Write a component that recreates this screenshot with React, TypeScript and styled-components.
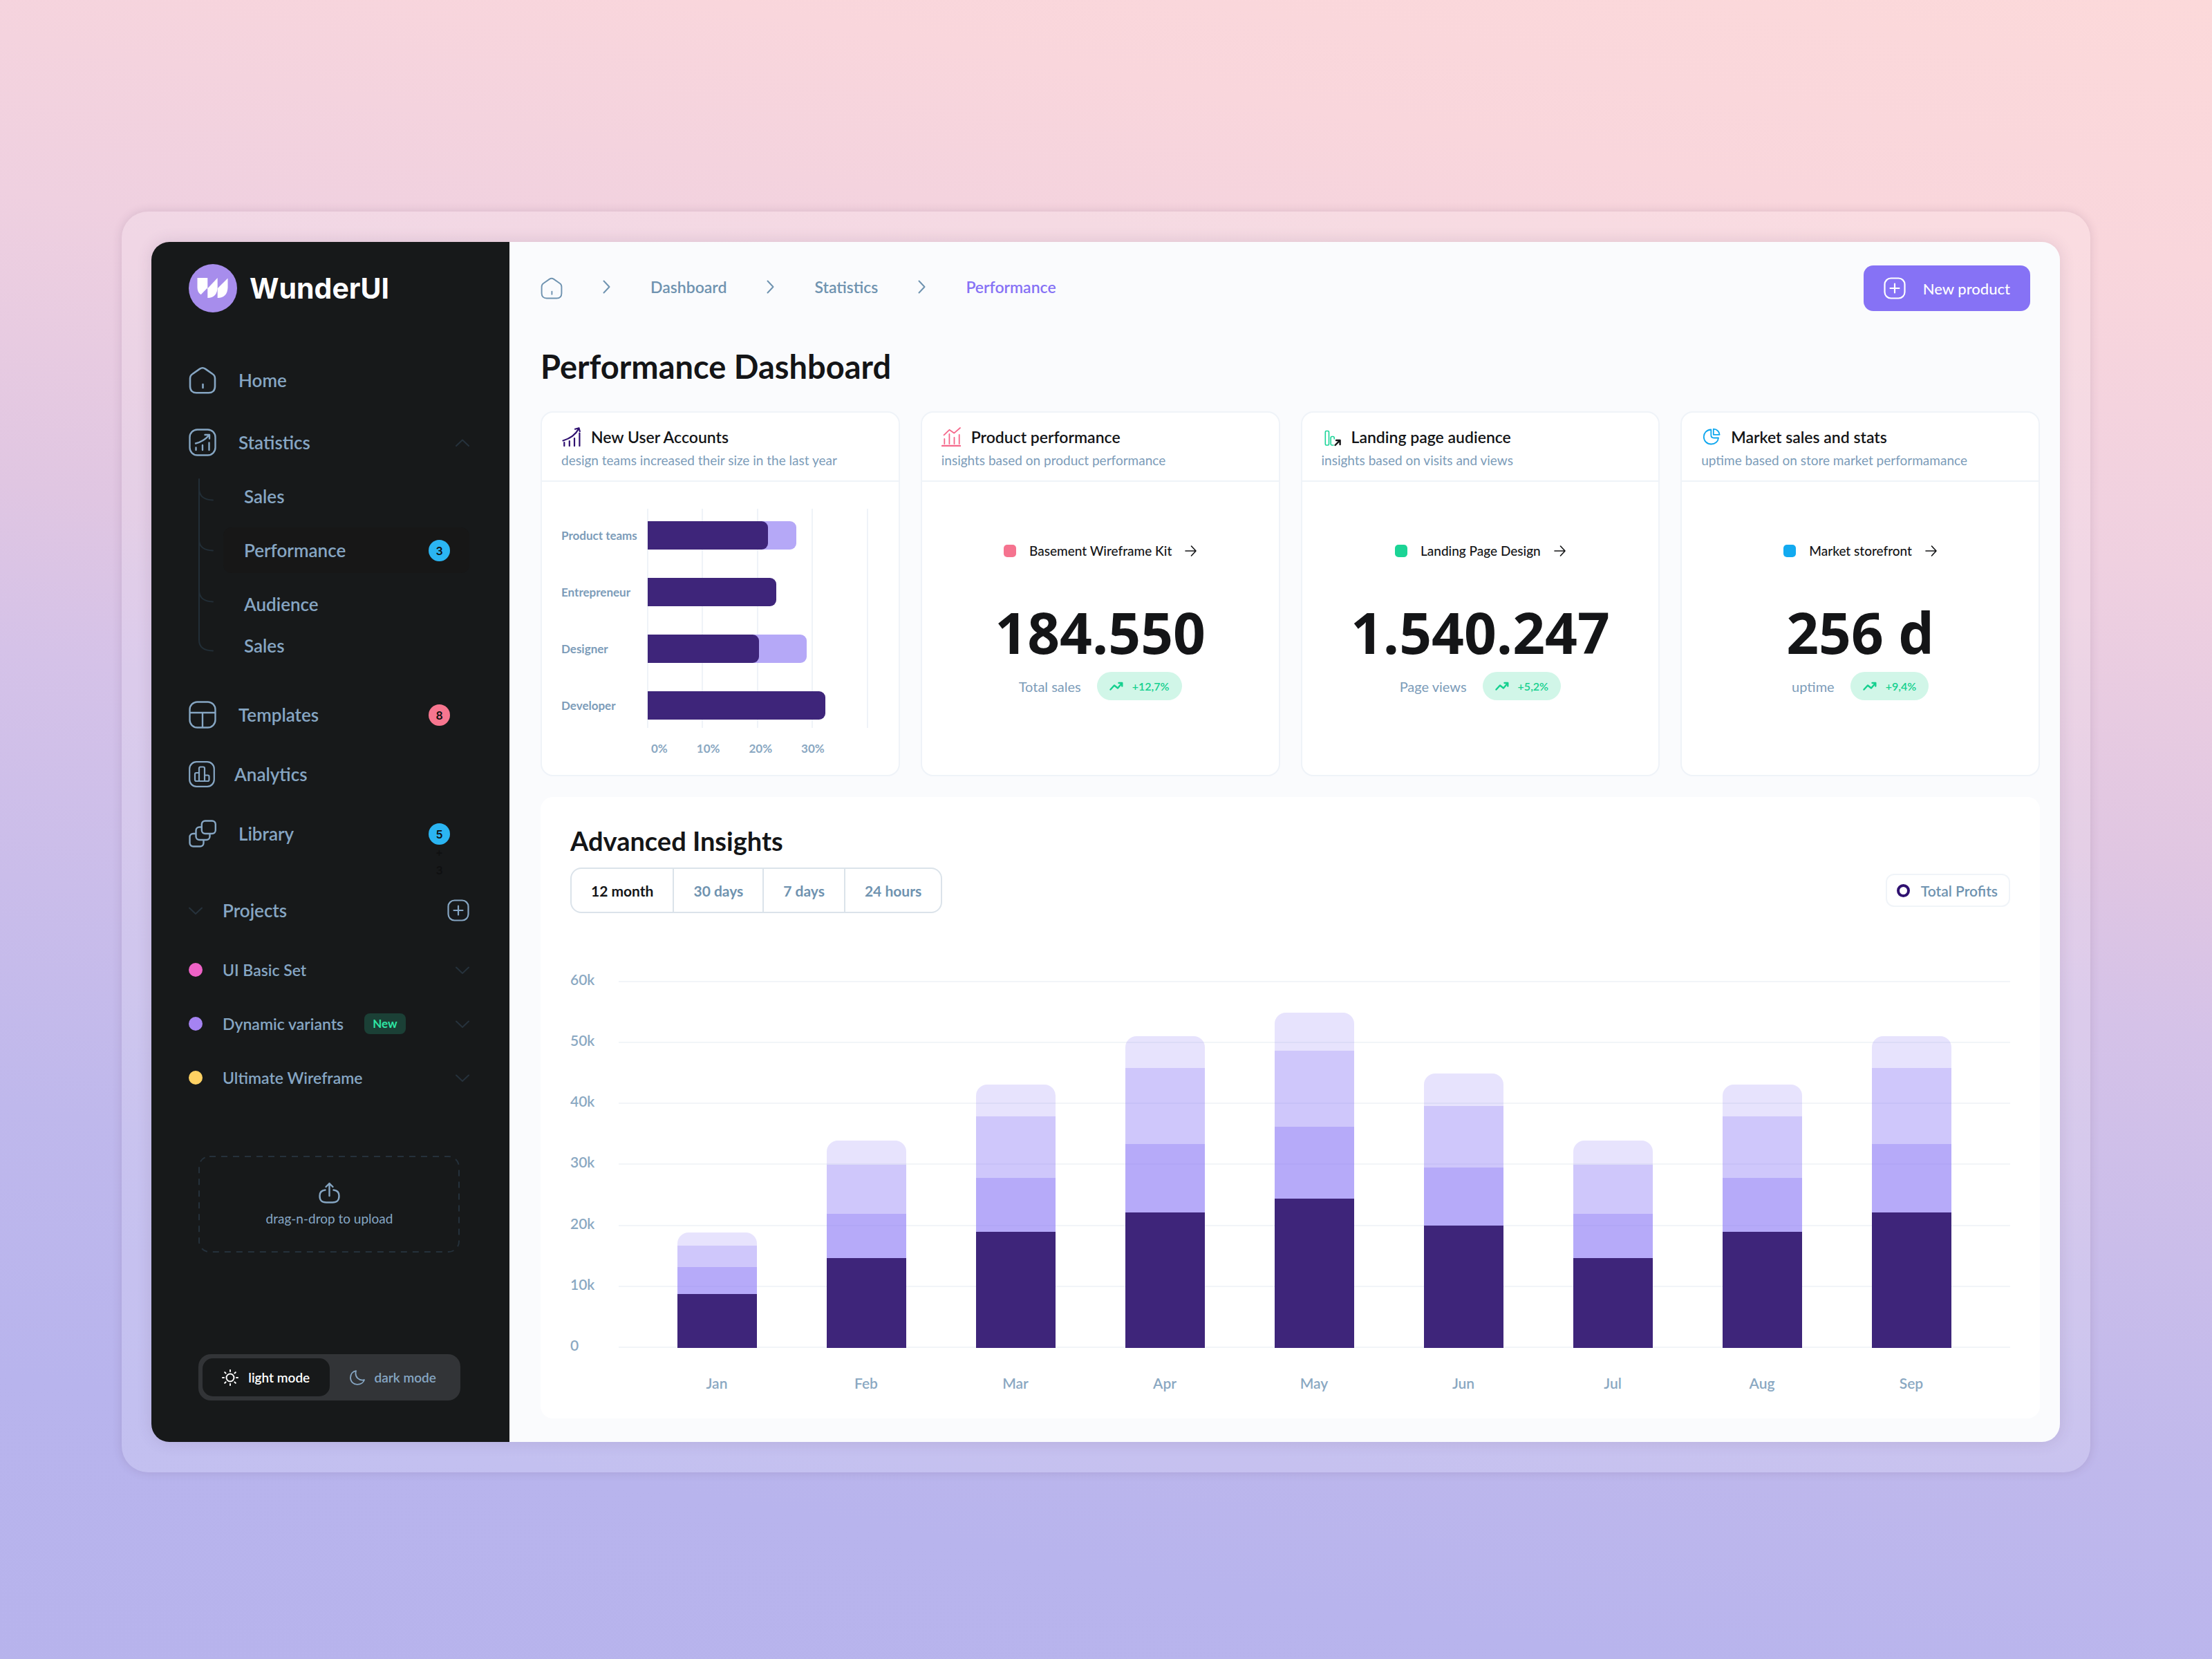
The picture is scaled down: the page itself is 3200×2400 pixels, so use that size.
import React, { useState } from "react";
import styled, { createGlobalStyle } from "styled-components";

const ink = "#141517";
const muted = "#7c9cb9";
const night = "#17191a";
const sky = "#86a6c3";
const violet = "#8672f5";
const grape = "#3e257a";
const hairline = "#eff3f8";

const GlobalStyle = createGlobalStyle`
  *, *::before, *::after { box-sizing: border-box; }
  body { margin: 0; font-family: Lato, "Liberation Sans", sans-serif; color: ${ink}; }
  h1, h2, h3, p, ul, ol { margin: 0; padding: 0; }
  ul, ol { list-style: none; }
  a { color: inherit; text-decoration: none; }
  button { font: inherit; color: inherit; background: none; border: 0; padding: 0; cursor: pointer; text-align: left; }
  svg { display: block; flex: none; }
`;

/* ---------- shell ---------- */

const Page = styled.div`
  min-height: 100vh;
  padding: 306px 176px;
  background: linear-gradient(
    190deg,
    #fcd9da 0%,
    #f9d6dc 13%,
    #efd0e0 28%,
    #e0c6e2 42%,
    #d5c2e8 50%,
    #bfb8ec 72%,
    #b8b4ed 85%,
    #b7b3ec 100%
  );
`;

const Frame = styled.div`
  padding: 44px 44px 44px 43px;
  border-radius: 38px;
  background: rgba(255, 255, 255, 0.16);
  box-shadow: 0 0 14px rgba(80, 50, 90, 0.16);
`;

const Shell = styled.div`
  display: grid;
  grid-template-columns: 518px minmax(0, 1fr);
  border-radius: 26px;
  overflow: hidden;
  box-shadow: 0 0 22px rgba(80, 50, 90, 0.14);
`;

/* ---------- sidebar ---------- */

const Sidebar = styled.aside`
  display: flex;
  flex-direction: column;
  padding: 32px 58px 60px 54px;
  background: ${night};
  color: ${sky};
`;

const Brand = styled.a`
  display: flex;
  align-items: center;
  gap: 18px;
  margin-bottom: 78px;
  color: #fff;
  font-family: Inter, "Liberation Sans", sans-serif;
  font-size: 41px;
  line-height: 66px;
  font-weight: 700;
`;

const NavList = styled.ul<{ $gap: number }>`
  display: flex;
  flex-direction: column;
  gap: ${(p) => p.$gap}px;
`;

const NavLink = styled.a<{ $gap?: number }>`
  display: flex;
  align-items: center;
  gap: ${(p) => p.$gap ?? 32}px;
  height: 40px;
  font-size: 26px;
  font-weight: 600;
`;

const NavButton = styled(NavLink).attrs({ as: "button" })`
  width: 100%;
`;

const Grow = styled.span`
  flex: 1;
`;

const Badge = styled.span<{ $color: string }>`
  width: 31px;
  height: 31px;
  margin: 0 28px 0 auto;
  padding-top: 3px;
  border-radius: 50%;
  background: ${(p) => p.$color};
  color: #0f1011;
  font-family: Inter, "Liberation Sans", sans-serif;
  font-size: 16px;
  line-height: 26px;
  font-weight: 600;
  text-align: center;
  white-space: pre-line;
`;

const SubNav = styled.div`
  display: flex;
  gap: 14px;
  margin: 25px 0 53px 14px;

  > svg {
    margin-top: 7px;
  }
`;

const SubList = styled.ul`
  flex: 1;
  display: flex;
  flex-direction: column;
  gap: 12px;

  li:last-child {
    margin-top: -12px;
  }
`;

const SubLink = styled.a<{ $active?: boolean; $short?: boolean }>`
  display: flex;
  align-items: center;
  height: ${(p) => (p.$short ? 54 : 66)}px;
  padding-left: 30px;
  border-radius: 12px;
  background: ${(p) => (p.$active ? "#171717" : "transparent")};
  font-size: 26px;
  font-weight: 600;
`;

const ProjectsHead = styled.div`
  display: flex;
  align-items: center;
  justify-content: space-between;
  height: 32px;
  margin: 75px 0 55px;
`;

const ProjectsToggle = styled.button`
  display: flex;
  align-items: center;
  gap: 29px;
  font-size: 26px;
  line-height: 32px;
  font-weight: 600;
`;

const ProjectRow = styled.button`
  display: flex;
  align-items: center;
  width: 100%;
  height: 30px;
  font-size: 23px;
  font-weight: 600;
`;

const ProjectDot = styled.span<{ $color: string }>`
  width: 20px;
  height: 20px;
  margin-right: 29px;
  border-radius: 50%;
  background: ${(p) => p.$color};
`;

const NewTag = styled.span`
  margin-left: 30px;
  padding: 0 12px;
  border-radius: 8px;
  background: #1b4036;
  color: #2ee6a4;
  font-size: 17px;
  line-height: 30px;
  font-weight: 700;
`;

const DropZone = styled.label`
  position: relative;
  display: flex;
  flex-direction: column;
  align-items: center;
  justify-content: center;
  gap: 10px;
  height: 140px;
  margin: 98px 13px 0 14px;
  font-size: 19px;
  line-height: 24px;
  cursor: pointer;

  > svg:first-of-type {
    position: absolute;
    inset: 0;
  }
`;

const HiddenInput = styled.input`
  position: absolute;
  width: 1px;
  height: 1px;
  opacity: 0;
`;

const ModeSwitch = styled.div`
  display: grid;
  grid-template-columns: 1fr 1fr;
  height: 67px;
  margin: auto 13px 0 14px;
  padding: 6px;
  border-radius: 18px;
  background: #323437;
`;

const ModeButton = styled.button<{ $active: boolean }>`
  display: flex;
  align-items: center;
  justify-content: center;
  gap: 14px;
  border-radius: 15px;
  background: ${(p) => (p.$active ? night : "transparent")};
  color: ${(p) => (p.$active ? "#fff" : sky)};
  font-size: 19px;
  font-weight: 600;
`;

/* ---------- main column ---------- */

const Main = styled.main`
  padding: 34px 29px 34px 45px;
  background: #fafbfd;
`;

const TopBar = styled.header`
  display: flex;
  align-items: center;
  justify-content: space-between;
  padding-right: 14px;
`;

const Crumbs = styled.ol`
  display: flex;
  align-items: center;
  gap: 58px;
  color: #6f93b0;
  font-size: 23px;
  font-weight: 600;

  li {
    display: flex;
    align-items: center;
    gap: 58px;
  }

  li + li {
    padding-bottom: 4px;
  }
`;

const Crumb = styled.a<{ $current?: boolean }>`
  color: ${(p) => (p.$current ? violet : "inherit")};
`;

const PrimaryButton = styled.button`
  display: flex;
  align-items: center;
  gap: 25px;
  height: 66px;
  padding: 0 29px;
  border-radius: 14px;
  background: ${violet};
  color: #fff;
  font-size: 22px;
  font-weight: 500;
`;

const PageTitle = styled.h1`
  margin: 50px 0 35px;
  font-size: 47px;
  line-height: 60px;
  font-weight: 700;
`;

const CardGrid = styled.section`
  display: grid;
  grid-template-columns: repeat(4, minmax(0, 1fr));
  gap: 30px;
  margin-bottom: 30px;
`;

const Card = styled.article`
  border: 2px solid ${hairline};
  border-radius: 18px;
  background: #fff;
`;

const CardHead = styled.header`
  padding: 20px 28px 17px;
  border-bottom: 2px solid ${hairline};
`;

const CardTitle = styled.h2`
  display: flex;
  align-items: center;
  gap: 15px;
  height: 30px;
  margin-bottom: 7px;
  font-size: 23px;
  font-weight: 600;
`;

const CardNote = styled.p`
  color: ${muted};
  font-size: 19px;
  line-height: 24px;
`;

const StatBody = styled.div`
  display: flex;
  flex-direction: column;
  align-items: center;
  padding-top: 88px;
`;

const StatLink = styled.a`
  display: flex;
  align-items: center;
  gap: 19px;
  font-size: 19px;
  line-height: 24px;
  font-weight: 500;
`;

const Swatch = styled.span<{ $color: string }>`
  width: 18px;
  height: 18px;
  border-radius: 5px;
  background: ${(p) => p.$color};
`;

const BigNumber = styled.p`
  margin: 57px 0 10px;
  font-family: "Open Sans", "Noto Sans", sans-serif;
  font-size: 82px;
  line-height: 96px;
  font-weight: 700;
`;

const StatFoot = styled.div`
  display: flex;
  align-items: center;
  gap: 23px;
  color: ${muted};
  font-size: 20px;
`;

const TrendPill = styled.span`
  display: flex;
  align-items: center;
  gap: 13px;
  height: 41px;
  padding: 0 18px;
  border-radius: 21px;
  background: #d1f6e8;
  color: #14d08e;
  font-size: 16px;
  font-weight: 600;
`;

/* ---------- horizontal bar chart ---------- */

const BarChart = styled.div`
  padding: 39px 44px 26px 28px;
`;

const BarPlot = styled.div`
  position: relative;
  display: flex;
  flex-direction: column;
  gap: 41px;
  padding: 18px 0 12px;
`;

const BarGrid = styled.div`
  position: absolute;
  inset: 0 0 0 124px;
  display: flex;
  justify-content: space-between;

  span {
    width: 2px;
    background: ${hairline};
  }
`;

const BarRow = styled.div`
  position: relative;
  display: grid;
  grid-template-columns: 125px 1fr;
  align-items: center;
  height: 41px;
  color: ${muted};
  font-size: 17px;
  font-weight: 700;
`;

const BarTrack = styled.div`
  display: grid;
  height: 41px;
`;

const Bar = styled.span<{ $color: string }>`
  grid-area: 1 / 1;
  border-radius: 0 9px 9px 0;
  background: ${(p) => p.$color};
`;

const BarAxis = styled.div`
  display: flex;
  gap: 42px;
  margin-top: 18px;
  padding-left: 130px;
  color: #8aa8c2;
  font-size: 17px;
  line-height: 24px;
  font-weight: 700;
`;

/* ---------- insights ---------- */

const Insights = styled.section`
  padding: 41px 43px 39px;
  border-radius: 18px;
  background: #fff;
`;

const InsightsTitle = styled.h2`
  margin-bottom: 17px;
  font-size: 38px;
  line-height: 44px;
  font-weight: 700;
`;

const InsightsBar = styled.div`
  display: flex;
  align-items: center;
  justify-content: space-between;
`;

const Segments = styled.div`
  display: flex;
  height: 66px;
  border: 2px solid #dbe3ea;
  border-radius: 16px;
`;

const Segment = styled.button<{ $active: boolean }>`
  padding: 0 28px;
  color: ${(p) => (p.$active ? ink : "#6f93b0")};
  font-size: 21px;
  font-weight: 700;

  & + & {
    border-left: 2px solid #dbe3ea;
  }
`;

const Legend = styled.div`
  display: flex;
  align-items: center;
  gap: 16px;
  height: 48px;
  padding: 0 16px 0 14px;
  border: 2px solid #f0f4f8;
  border-radius: 12px;
  color: #6f93b0;
  font-size: 21px;
  font-weight: 600;
`;

const Ring = styled.span`
  width: 19px;
  height: 19px;
  border: 4px solid #2f1170;
  border-radius: 50%;
`;

const Chart = styled.div`
  display: grid;
  grid-template-columns: 70px 1fr;
  margin-top: 98px;
  color: #8aa8c2;
  font-size: 21px;
  line-height: 24px;
  font-weight: 600;
`;

const YAxis = styled.div`
  display: flex;
  flex-direction: column;
  justify-content: space-between;
  margin: -14px 0 -8px;
`;

const Plot = styled.div`
  display: grid;
  height: 531px;
`;

const GridLines = styled.div`
  grid-area: 1 / 1;
  display: flex;
  flex-direction: column;
  justify-content: space-between;

  span {
    height: 2px;
    background: #f2f5f8;
  }
`;

const Columns = styled.div`
  grid-area: 1 / 1;
  display: grid;
  grid-template-columns: repeat(9, 1fr);
  padding: 0 35px 0 34px;
`;

const Column = styled.div`
  display: flex;
  flex-direction: column;
  justify-content: flex-end;
  width: 115px;
  height: 531px;
  margin: 0 auto;
`;

const Slice = styled.span<{ $color: string }>`
  background: ${(p) => p.$color};

  &:first-child {
    border-radius: 16px 16px 0 0;
  }
`;

const Months = styled.div`
  grid-column: 2;
  display: grid;
  grid-template-columns: repeat(9, 1fr);
  margin-top: 39px;
  padding: 0 35px 0 34px;
  text-align: center;
`;

/* ---------- icons ---------- */

type StrokeProps = {
  w: number;
  h?: number;
  box?: string;
  stroke?: number;
  color?: string;
  children: React.ReactNode;
};

const Stroke = ({ w, h = w, box, stroke = 3, color = "currentColor", children }: StrokeProps) => (
  <svg
    width={w}
    height={h}
    viewBox={box ?? `0 0 ${w} ${h}`}
    fill="none"
    stroke={color}
    strokeWidth={stroke}
    strokeLinecap="round"
    strokeLinejoin="round"
    aria-hidden="true"
  >
    {children}
  </svg>
);

const LogoMark = () => (
  <svg width="70" height="70" viewBox="0 0 70 70" aria-hidden="true">
    <circle cx="35" cy="35" r="35" fill="#a78dec" />
    <g fill="#fff">
      <path d="M12.5 20H27.3V34.3L17.6 44.3Q12.5 41 12.5 34Z" />
      <path d="M27.3 35.3L41.7 20V34Q41.2 48.6 27.3 49Z" />
      <path d="M41.7 35.3L56.5 20.4V34Q56 48.6 41.7 49Z" />
    </g>
  </svg>
);

const HomeIcon = ({ size = 40, stroke = 2.6 }) => (
  <Stroke w={size} box="0 0 40 40" stroke={stroke}>
    <path d="M2 17.5C2 14.5 3 12.5 5.5 11L16 3.6C18.6 1.9 21.4 1.9 24 3.6L34.5 11C37 12.5 38 14.5 38 17.5V29C38 35 34.5 38.2 29 38.2H11C5.5 38.2 2 35 2 29Z" />
    <path d="M20.5 26V31" />
  </Stroke>
);

const StatsIcon = () => (
  <Stroke w={40} stroke={2.4}>
    <rect x="1.5" y="1.5" width="37" height="37" rx="11" />
    <path d="M10.5 27.5V31M20 24V31M29.5 20.5V31" />
    <path d="M10 21.5C18 19.5 24 16 29.5 9.5M23.5 9H30V14.5" />
  </Stroke>
);

const TemplatesIcon = () => (
  <Stroke w={40} stroke={2.4}>
    <rect x="1.5" y="1.5" width="37" height="37" rx="11" />
    <path d="M2 17H38M20 17V38" />
  </Stroke>
);

const AnalyticsIcon = () => (
  <Stroke w={38} stroke={2.2}>
    <rect x="1.2" y="1.2" width="35.6" height="35.6" rx="10" />
    <path d="M15 29V10.5Q15 8.5 17 8.5H21Q23 8.5 23 10.5V29M15 17H11Q9 17 9 19V27Q9 29 11 29H27.5Q29.5 29 29.5 27V22.5Q29.5 20.5 27.5 20.5H23" />
  </Stroke>
);

const LibraryIcon = () => (
  <Stroke w={40} stroke={2.4}>
    <rect x="1.5" y="20" width="20" height="18.5" rx="5" />
    <rect x="10.5" y="10.5" width="20" height="18.5" rx="5" fill={night} />
    <rect x="18.8" y="1.5" width="20" height="18.5" rx="5" fill={night} />
  </Stroke>
);

const PlusIcon = ({ size = 32 }) => (
  <Stroke w={size} box="0 0 32 32" stroke={2.2}>
    <rect x="1.5" y="1.5" width="29" height="29" rx="9" />
    <path d="M9.5 16H22.5M16 9.5V22.5" />
  </Stroke>
);

const Chevron = ({ up = false }) => (
  <Stroke w={20} h={11} stroke={2} color="#26323c">
    <path d={up ? "M1 10L10 1.5L19 10" : "M1 1.5L10 10L19 1.5"} />
  </Stroke>
);

const CrumbChevron = () => (
  <Stroke w={11} h={20} stroke={2}>
    <path d="M1.5 1.5L9.5 10L1.5 18.5" />
  </Stroke>
);

const TreeLines = () => (
  <Stroke w={22} h={252} stroke={2} color="#222e37">
    <path d="M1 1V234Q1 249 21 249.5M1 16Q2 31 21 31.5M1 90Q2 104 21 104.5M1 163Q2 178 21 178.5" />
  </Stroke>
);

const UploadIcon = () => (
  <Stroke w={31} stroke={2.4}>
    <path d="M9.5 11.5C4 12 1.5 15 1.5 20C1.5 27 4.5 29.5 11 29.5H20C26.5 29.5 29.5 27 29.5 20C29.5 15 27 12 21.5 11.5" />
    <path d="M15.5 20V2M10.5 7L15.5 2L20.5 7" />
  </Stroke>
);

const SunIcon = () => (
  <Stroke w={24} stroke={2}>
    <circle cx="12" cy="12" r="5.5" />
    <path d="M12 1V3M12 21V23M1 12H3M21 12H23M4.2 4.2L5.6 5.6M18.4 18.4L19.8 19.8M4.2 19.8L5.6 18.4M18.4 5.6L19.8 4.2" />
  </Stroke>
);

const MoonIcon = () => (
  <Stroke w={22} stroke={1.8}>
    <path d="M9 1.2C4 2.2 1 6.2 1 11C1 16.8 5.3 20.8 10.8 20.8C15.8 20.8 19.8 18 21 14.2C14 15.8 6.5 10.5 9 1.2Z" />
  </Stroke>
);

const GrowthIcon = () => (
  <Stroke w={28} stroke={2.2} color="#2f1170">
    <path d="M4.3 22V27M11.8 20V27M19 16V27M26.4 8.5V27" />
    <path d="M2.5 19.5C12 16.5 20 12 25 2.5M20 2.8L25.5 1.2L26.8 6" />
  </Stroke>
);

const ProductIcon = () => (
  <Stroke w={28} stroke={1.8} color="#f5678a">
    <path d="M1 27H27" strokeWidth="2.4" />
    <path d="M4.3 17V24M11.4 10V24M18.5 15V24M25.7 11V24M3.6 11.4L11.4 3.8L18.2 8.6L27 1" />
  </Stroke>
);

const AudienceIcon = () => (
  <Stroke w={28} stroke={1.6} color="#1ad598">
    <rect x="5.3" y="5.5" width="5.2" height="20.5" rx="1.5" />
    <path d="M18.2 17V15.5Q18.2 13.5 16.2 13.5H15Q13.2 13.5 13.2 15.5V24Q13.2 26 15 26H17" />
    <path d="M19.6 26L26.4 19.2M21 19H26.6V25" stroke={ink} strokeWidth="2.4" />
  </Stroke>
);

const MarketIcon = () => (
  <Stroke w={28} stroke={1.8} color="#0fa7ee">
    <path d="M14.3 3.5C7.5 4 3.8 8.5 3.8 14C3.8 20 8.5 24.5 14.5 24.5C20 24.5 24.5 21 25 15.5H18.5Q14.3 15.5 14.3 11.5Z" />
    <path d="M17.8 2.6C22.5 2.8 26.2 6 26.6 10.8H17.8Z" />
  </Stroke>
);

const ArrowIcon = () => (
  <Stroke w={17} h={16} stroke={1.6}>
    <path d="M1 8H16M9.5 1L16 8L9.5 15" />
  </Stroke>
);

const TrendIcon = () => (
  <Stroke w={20} h={13} stroke={2.4}>
    <path d="M1.5 11.5L7 5.5L12 9.5L17.5 3M13.5 2H18.3V6.5" />
  </Stroke>
);

/* ---------- data ---------- */

const projects = [
  { name: "UI Basic Set", color: "#ee62c6" },
  { name: "Dynamic variants", color: "#a583f2", isNew: true },
  { name: "Ultimate Wireframe", color: "#fed163" },
];

const accounts = [
  { name: "Product teams", value: 54.5, total: 67.5 },
  { name: "Entrepreneur", value: 58.5, total: 58.5 },
  { name: "Designer", value: 50.5, total: 72 },
  { name: "Developer", value: 80.5, total: 80.5 },
];

const stats = [
  {
    title: "Product performance",
    note: "insights based on product performance",
    icon: <ProductIcon />,
    link: "Basement Wireframe Kit",
    color: "#f5738f",
    value: "184.550",
    label: "Total sales",
    trend: "+12,7%",
  },
  {
    title: "Landing page audience",
    note: "insights based on visits and views",
    icon: <AudienceIcon />,
    link: "Landing Page Design",
    color: "#1bd495",
    value: "1.540.247",
    label: "Page views",
    trend: "+5,2%",
  },
  {
    title: "Market sales and stats",
    note: "uptime based on store market performamance",
    icon: <MarketIcon />,
    link: "Market storefront",
    color: "#12aaf0",
    value: "256 d",
    label: "uptime",
    trend: "+9,4%",
  },
];

const scale = [60, 50, 40, 30, 20, 10, 0];
const sliceColors = [
  "rgba(134, 114, 245, 0.2)",
  "rgba(134, 114, 245, 0.4)",
  "rgba(134, 114, 245, 0.6)",
  grape,
];

/* stacked values in thousands, from the top slice down */
const profits = [
  { month: "Jan", parts: [2.2, 3.5, 4.4, 8.8] },
  { month: "Feb", parts: [4, 8, 7.2, 14.7] },
  { month: "Mar", parts: [5.3, 10, 8.8, 19] },
  { month: "Apr", parts: [5.2, 12.5, 11.2, 22.1] },
  { month: "May", parts: [6.2, 12.4, 11.8, 24.4] },
  { month: "Jun", parts: [5.3, 10.1, 9.5, 20] },
  { month: "Jul", parts: [4, 8, 7.2, 14.7] },
  { month: "Aug", parts: [5.3, 10, 8.8, 19] },
  { month: "Sep", parts: [5.2, 12.5, 11.2, 22.1] },
];

const ranges = ["12 month", "30 days", "7 days", "24 hours"];

/* ---------- sections ---------- */

function SideNavigation() {
  const [mode, setMode] = useState("light");
  return (
    <Sidebar>
      <Brand href="#">
        <LogoMark />
        WunderUI
      </Brand>
      <nav>
        <NavList $gap={50}>
          <li>
            <NavLink href="#">
              <HomeIcon />
              Home
            </NavLink>
          </li>
          <li>
            <NavButton aria-expanded="true">
              <StatsIcon />
              Statistics
              <Grow />
              <Chevron up />
            </NavButton>
          </li>
        </NavList>
        <SubNav>
          <TreeLines />
          <SubList>
            <li><SubLink href="#">Sales</SubLink></li>
            <li>
              <SubLink href="#" $active aria-current="page">
                Performance
                <Badge $color="#2bb5f2">3</Badge>
              </SubLink>
            </li>
            <li><SubLink href="#">Audience</SubLink></li>
            <li><SubLink href="#" $short>Sales</SubLink></li>
          </SubList>
        </SubNav>
        <NavList $gap={46}>
          <li>
            <NavLink href="#">
              <TemplatesIcon />
              Templates
              <Badge $color="#f7768f">8</Badge>
            </NavLink>
          </li>
          <li>
            <NavLink href="#" $gap={28}>
              <AnalyticsIcon />
              Analytics
            </NavLink>
          </li>
          <li>
            <NavLink href="#">
              <LibraryIcon />
              Library
              <Badge $color="#2bb5f2">{"5\n+\n3"}</Badge>
            </NavLink>
          </li>
        </NavList>
      </nav>
      <ProjectsHead>
        <ProjectsToggle aria-expanded="true">
          <Chevron />
          Projects
        </ProjectsToggle>
        <button aria-label="Add project">
          <PlusIcon />
        </button>
      </ProjectsHead>
      <NavList $gap={48}>
        {projects.map((p) => (
          <li key={p.name}>
            <ProjectRow aria-expanded="false">
              <ProjectDot $color={p.color} />
              {p.name}
              {p.isNew && <NewTag>New</NewTag>}
              <Grow />
              <Chevron />
            </ProjectRow>
          </li>
        ))}
      </NavList>
      <DropZone>
        <svg width="100%" height="100%" aria-hidden="true">
          <rect
            x="1"
            y="1"
            width="376"
            height="138"
            rx="15"
            fill="none"
            stroke="#25313b"
            strokeWidth="2"
            strokeDasharray="9 8"
          />
        </svg>
        <HiddenInput type="file" />
        <UploadIcon />
        drag-n-drop to upload
      </DropZone>
      <ModeSwitch>
        <ModeButton $active={mode === "light"} onClick={() => setMode("light")}>
          <SunIcon />
          light mode
        </ModeButton>
        <ModeButton $active={mode === "dark"} onClick={() => setMode("dark")}>
          <MoonIcon />
          dark mode
        </ModeButton>
      </ModeSwitch>
    </Sidebar>
  );
}

function AccountsCard() {
  return (
    <Card>
      <CardHead>
        <CardTitle>
          <GrowthIcon />
          New User Accounts
        </CardTitle>
        <CardNote>design teams increased their size in the last year</CardNote>
      </CardHead>
      <BarChart>
        <BarPlot>
          <BarGrid>
            <span />
            <span />
            <span />
            <span />
            <span />
          </BarGrid>
          {accounts.map((a) => (
            <BarRow key={a.name}>
              {a.name}
              <BarTrack>
                {a.total > a.value && <Bar $color="#b5a8f7" style={{ width: `${a.total}%` }} />}
                <Bar $color={grape} style={{ width: `${a.value}%` }} />
              </BarTrack>
            </BarRow>
          ))}
        </BarPlot>
        <BarAxis>
          <span>0%</span>
          <span>10%</span>
          <span>20%</span>
          <span>30%</span>
        </BarAxis>
      </BarChart>
    </Card>
  );
}

function ProfitInsights() {
  const [range, setRange] = useState(ranges[0]);
  return (
    <Insights>
      <InsightsTitle>Advanced Insights</InsightsTitle>
      <InsightsBar>
        <Segments>
          {ranges.map((r) => (
            <Segment key={r} $active={r === range} onClick={() => setRange(r)}>
              {r}
            </Segment>
          ))}
        </Segments>
        <Legend>
          <Ring />
          Total Profits
        </Legend>
      </InsightsBar>
      <Chart>
        <YAxis>
          {scale.map((s) => (
            <span key={s}>{s ? `${s}k` : "0"}</span>
          ))}
        </YAxis>
        <Plot>
          <GridLines>
            {scale.map((s) => (
              <span key={s} />
            ))}
          </GridLines>
          <Columns>
            {profits.map((p) => (
              <Column key={p.month}>
                {p.parts.map((v, i) => (
                  <Slice key={i} $color={sliceColors[i]} style={{ height: `${(v / 60) * 100}%` }} />
                ))}
              </Column>
            ))}
          </Columns>
        </Plot>
        <Months>
          {profits.map((p) => (
            <span key={p.month}>{p.month}</span>
          ))}
        </Months>
      </Chart>
    </Insights>
  );
}

export default function App() {
  return (
    <>
      <GlobalStyle />
      <Page>
        <Frame>
          <Shell>
            <SideNavigation />
            <Main>
              <TopBar>
                <nav aria-label="Breadcrumb">
                  <Crumbs>
                    <li>
                      <Crumb href="#" aria-label="Home">
                        <HomeIcon size={32} stroke={2.4} />
                      </Crumb>
                    </li>
                    <li>
                      <CrumbChevron />
                      <Crumb href="#">Dashboard</Crumb>
                    </li>
                    <li>
                      <CrumbChevron />
                      <Crumb href="#">Statistics</Crumb>
                    </li>
                    <li>
                      <CrumbChevron />
                      <Crumb href="#" $current aria-current="page">
                        Performance
                      </Crumb>
                    </li>
                  </Crumbs>
                </nav>
                <PrimaryButton>
                  <PlusIcon />
                  New product
                </PrimaryButton>
              </TopBar>
              <PageTitle>Performance Dashboard</PageTitle>
              <CardGrid>
                <AccountsCard />
                {stats.map((s) => (
                  <Card key={s.title}>
                    <CardHead>
                      <CardTitle>
                        {s.icon}
                        {s.title}
                      </CardTitle>
                      <CardNote>{s.note}</CardNote>
                    </CardHead>
                    <StatBody>
                      <StatLink href="#">
                        <Swatch $color={s.color} />
                        {s.link}
                        <ArrowIcon />
                      </StatLink>
                      <BigNumber>{s.value}</BigNumber>
                      <StatFoot>
                        {s.label}
                        <TrendPill>
                          <TrendIcon />
                          {s.trend}
                        </TrendPill>
                      </StatFoot>
                    </StatBody>
                  </Card>
                ))}
              </CardGrid>
              <ProfitInsights />
            </Main>
          </Shell>
        </Frame>
      </Page>
    </>
  );
}
